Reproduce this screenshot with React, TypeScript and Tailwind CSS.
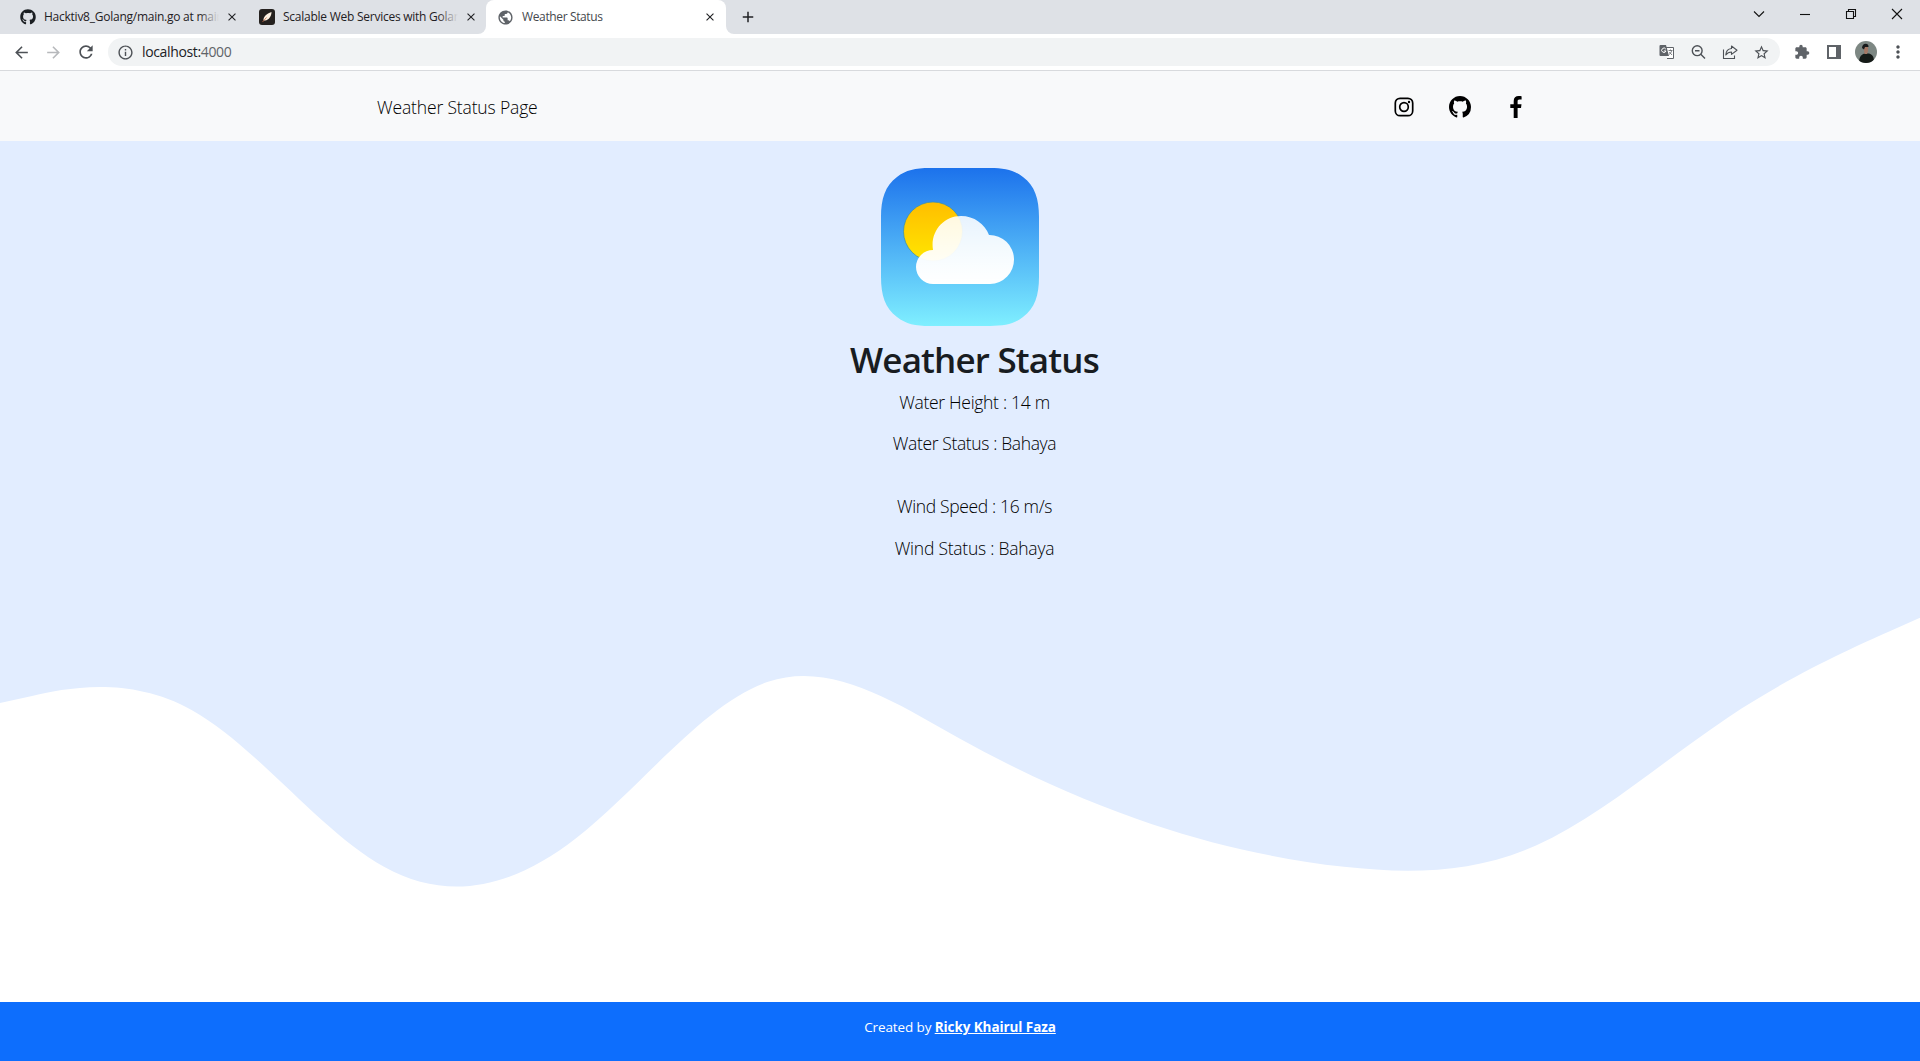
import type { ReactNode } from "react";
import {
  MdArrowBack,
  MdArrowForward,
  MdRefresh,
  MdInfoOutline,
  MdStarOutline,
  MdExtension,
  MdMoreVert,
  MdPublic,
  MdClose,
  MdAdd,
} from "react-icons/md";
import { FaGithub } from "react-icons/fa";
import { BsGithub } from "react-icons/bs";

function Tab({ icon, title, fade }: { icon: ReactNode; title: string; fade?: boolean }) {
  return (
    <div className="flex h-full items-center pr-[11px]">
      <span className="flex w-4 shrink-0 justify-center">{icon}</span>
      <span className="relative ml-2 w-[175px] overflow-hidden whitespace-nowrap text-[12px] leading-4 tracking-[-0.25px] text-[#1f2023]">
        {title}
        {fade && <span className="absolute inset-y-0 right-0 w-5 bg-linear-to-r from-transparent to-[#dee1e6]" />}
      </span>
      <MdClose className="ml-[7px] h-3 w-3 scale-110 text-[#202124]" />
    </div>
  );
}

function WindowControls() {
  return (
    <div className="ml-auto flex h-7 items-center text-[#111]">
      {["M1 3.5 6 8.5 11 3.5", "M1 6.5H11", "M1.5 3.5H8.5V10.5H1.5ZM3.5 3V1.5H10.5V8.5H9", "M1 1 11 11M11 1 1 11"].map((d) => (
        <span key={d} className="flex w-[46px] justify-center">
          <svg viewBox="0 0 12 12" className="h-3 w-3" fill="none" stroke="currentColor" strokeWidth="1.1">
            <path d={d} />
          </svg>
        </span>
      ))}
    </div>
  );
}

function TabStrip() {
  return (
    <div className="flex h-[34px] bg-[#dee1e6]">
      <div className="flex w-[486px] shrink-0 items-center pl-5">
        <Tab icon={<FaGithub className="h-4 w-4 text-[#1b1f23]" />} title="Hacktiv8_Golang/main.go at main" fade />
        <span className="mr-[10px] h-5 w-px bg-[#808387]" />
        <Tab
          icon={
            <svg viewBox="0 0 16 16" className="h-4 w-4">
              <rect width="16" height="16" rx="3" fill="#25211f" />
              <path d="M4.500 11.500C4 8 7.500 4.500 12.500 3 12.500 7 10 11 6 11.500Z" fill="#fff3e4" />
              <path d="M3.500 13 7.500 8.500" stroke="#c56b45" strokeWidth=".8" />
            </svg>
          }
          title="Scalable Web Services with Golang"
          fade
        />
      </div>
      <div className="relative flex h-full w-[240px] items-center rounded-t-lg bg-white pl-[11px] pr-[10px]">
        <span className="absolute -left-2 bottom-0 h-2 w-2 bg-white">
          <span className="block h-2 w-2 rounded-br-lg bg-[#dee1e6]" />
        </span>
        <span className="absolute -right-2 bottom-0 h-2 w-2 bg-white">
          <span className="block h-2 w-2 rounded-bl-lg bg-[#dee1e6]" />
        </span>
        <MdPublic className="h-[17px] w-[17px] text-[#5f6368]" />
        <span className="ml-2 text-[12px] leading-4 tracking-[-0.37px] text-[#45484d]">Weather Status</span>
        <MdClose className="ml-auto h-3 w-3 scale-110 text-[#202124]" />
      </div>
      <MdAdd className="ml-[13px] mt-[8px] h-[18px] w-[18px] text-[#202124]" />
      <WindowControls />
    </div>
  );
}

function TranslateIcon() {
  return (
    <svg viewBox="0 0 16 16" className="h-4 w-4">
      <path d="M7 3.5H14.5V14.5H8" fill="#fff" stroke="#5f6368" />
      <path d="M1.5 1H7L10 12H1.5A1 1 0 0 1 .5 11V2A1 1 0 0 1 1.5 1Z" fill="#5f6368" />
      <path d="M6.8 5.1A2.2 2.2 0 1 0 7 7H4.9" fill="none" stroke="#fff" />
      <path d="M9.5 6.5H13.5M11.5 5.5V6.5M12.7 6.5C12.3 8.5 11 10 10 10.5M10.3 8 13 11" fill="none" stroke="#5f6368" strokeWidth=".8" />
    </svg>
  );
}

function Toolbar() {
  return (
    <div className="flex h-[37px] items-center border-b border-[#d8dadd] bg-white pl-[12px] text-[#4d5156]">
      <MdArrowBack className="h-[19px] w-[19px]" />
      <MdArrowForward className="ml-[13px] h-[19px] w-[19px] text-[#b7b9bc]" />
      <MdRefresh className="ml-[13px] h-[20px] w-[20px]" />
      <div className="ml-[12px] flex h-7 w-[1672px] items-center rounded-full bg-[#f1f3f4] pl-[9px] pr-[10px]">
        <MdInfoOutline className="h-[17px] w-[17px]" />
        <span className="ml-2 text-[14px] leading-5 tracking-[-0.36px] text-[#202124]">
          localhost:<span className="text-[#5f6368]">4000</span>
        </span>
        <div className="ml-auto flex items-center gap-[15px]">
          <TranslateIcon />
          <svg viewBox="0 0 16 16" className="h-4 w-[17px]" fill="none" stroke="currentColor" strokeWidth="1.4">
            <circle cx="6.7" cy="6.7" r="4.9" />
            <path d="M10.3 10.3 14.5 14.5M4.5 6.7H9" />
          </svg>
          <svg viewBox="0 0 16 16" className="h-4 w-4" fill="none" stroke="currentColor" strokeWidth="1.1">
            <path d="M1.5 5.5V14.5H12.5V11.5" />
            <path d="M9.5 2 15 6.2 9.5 10.4V8C6.8 8 5.2 9 3.8 11 4 7.3 6 4.8 9.5 4.5Z" strokeLinejoin="round" />
          </svg>
          <MdStarOutline className="h-[17px] w-[17px]" />
        </div>
      </div>
      <MdExtension className="ml-[14px] h-4 w-4 text-[#5f6368]" />
      <svg viewBox="0 0 14 14" className="ml-[17px] h-[14px] w-[14px]" fill="#5f6368">
        <path fillRule="evenodd" d="M0 0H14V14H0ZM2 2V12H9V2Z" />
      </svg>
      <svg viewBox="0 0 22 22" className="ml-[14px] h-[22px] w-[22px]">
        <defs>
          <clipPath id="avatar">
            <circle cx="11" cy="11" r="11" />
          </clipPath>
        </defs>
        <g clipPath="url(#avatar)">
          <rect width="22" height="22" fill="#7d8783" />
          <path d="M4 22C4 15 7 13 10 12.5L14 12.5C18 14 19 16 19 22Z" fill="#151a17" />
          <path d="M8.5 5H13V10L12 13H9.5Z" fill="#a57865" />
          <path d="M7 7C7 1.5 14 1.5 13.5 6L10 6 9 8.5Z" fill="#17191a" />
        </g>
      </svg>
      <MdMoreVert className="ml-[11px] h-5 w-5" />
    </div>
  );
}

function WeatherIcon() {
  return (
    <svg viewBox="0 0 158 158" className="h-[158px] w-[158px]">
      <defs>
        <linearGradient id="sky" x2="0" y2="1">
          <stop stopColor="#1c72ec" />
          <stop offset="1" stopColor="#7fefff" />
        </linearGradient>
        <linearGradient id="sun" x2="0" y2="1">
          <stop stopColor="#ffbe00" />
          <stop offset="1" stopColor="#ffe600" />
        </linearGradient>
        <linearGradient id="cloud" x2="0" y2="1">
          <stop stopColor="#fff" stopOpacity=".88" />
          <stop offset="1" stopColor="#fff" />
        </linearGradient>
      </defs>
      <path
        d="M49 0H109C124 0 133 2 142 9 154 18 158 31 158 49V109C158 127 154 140 142 149 133 156 124 158 109 158H49C34 158 25 156 16 149 4 140 0 127 0 109V49C0 31 4 18 16 9 25 2 34 0 49 0Z"
        fill="url(#sky)"
      />
      <circle cx="52" cy="63.5" r="29.5" fill="url(#sun)" stroke="#368cae" strokeWidth=".7" />
      <path
        d="M52 116A17 17 0 1 1 52 82C49 64 62 48 80 48 93 48 104 56 108 67A24.5 24.5 0 1 1 109 116Z"
        fill="url(#cloud)"
      />
    </svg>
  );
}

function Navbar() {
  return (
    <nav className="flex h-[70px] items-center bg-[#f8f9fa] pl-[377px] pr-[393px] text-black">
      <span className="pt-[2px] text-[17.5px] font-light leading-7 tracking-[-0.15px]">Weather Status Page</span>
      <div className="ml-auto flex items-center gap-[34px] pt-[2px]">
        <svg viewBox="0 0 22 22" className="h-[22px] w-[22px]" fill="none" stroke="currentColor" strokeWidth="1.7">
          <rect x="2.3" y="2.3" width="17.4" height="17.4" rx="4.8" />
          <circle cx="11" cy="11" r="4.3" />
          <circle cx="16" cy="6" r="1.2" fill="currentColor" stroke="none" />
        </svg>
        <BsGithub className="h-[22px] w-[22px]" />
        <svg viewBox="0 0 22 22" className="h-[22px] w-[22px]" fill="currentColor">
          <path d="M8.7 22V12H5.3V8.2H8.7V5.1C8.7 1.7 10.7 0 13.6 0 15 0 16.200.1 16.600.2V3.600H14.500C12.900 3.600 12.600 4.400 12.600 5.500V8.200H16.500L16 12H12.600V22Z" />
        </svg>
      </div>
    </nav>
  );
}

export default function App() {
  return (
    <div className="flex h-[1061px] w-[1920px] flex-col overflow-hidden bg-white font-['Open_Sans',sans-serif]">
      <TabStrip />
      <Toolbar />
      <Navbar />
      <main className="flex h-[434px] shrink-0 flex-col items-center bg-[#e2edff] pt-[27px]">
        <WeatherIcon />
        <div className="flex flex-col items-center pl-[29px] text-[17.5px] font-light leading-[27px] text-black">
          <h1 className="mt-[12px] text-[35px] font-semibold leading-[43px] tracking-[-0.83px] text-[#181c21]">Weather Status</h1>
          <p className="mt-[8px] tracking-[-0.3px]">Water Height : 14 m</p>
          <p className="mt-[14px] tracking-[-0.37px]">Water Status : Bahaya</p>
          <p className="mt-[36px] tracking-[-0.35px]">Wind Speed : 16 m/s</p>
          <p className="mt-[15px] tracking-[-0.24px]">Wind Status : Bahaya</p>
        </div>
      </main>
      <svg viewBox="0 0 1440 320" preserveAspectRatio="none" className="h-[427px] w-full shrink-0">
        <path
          fill="#e2edff"
          d="M0,96L24,90.7C48,85.3,96,74.7,144,101.3C192,128,240,192,288,218.7C336,245.3,384,234.7,432,197.3C480,160,528,96,576,80C624,64,672,96,720,122.7C768,149.3,816,170.7,864,186.7C912,202.7,960,213.3,1008,218.7C1056,224,1104,224,1152,202.7C1200,181.3,1248,138.7,1296,106.7C1344,74.7,1392,53.3,1416,42.7L1440,32V0H0Z"
        />
      </svg>
      <footer className="flex flex-1 justify-center bg-[#0d6efd] pt-[15px] text-[13.5px] leading-[21px] text-white">
        <p>
          <span className="tracking-[-0.12px]">Created by </span>
          <a className="font-bold tracking-[-0.08px] underline">Ricky Khairul Faza</a>
        </p>
      </footer>
    </div>
  );
}
